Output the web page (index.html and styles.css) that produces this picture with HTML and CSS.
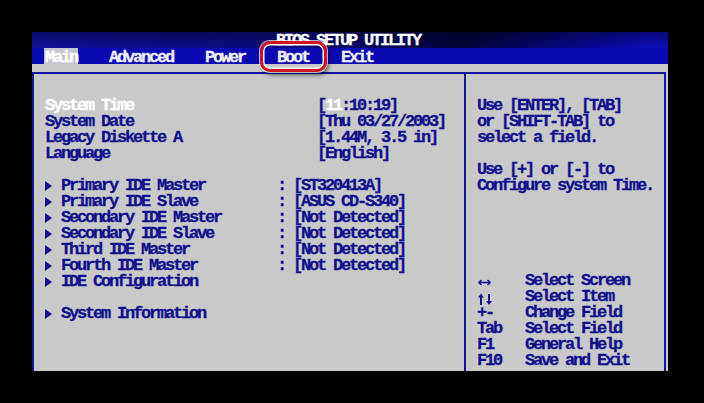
FILE: index.html
```html
<!DOCTYPE html>
<html lang="en">
<head>
    <meta charset="UTF-8">
    <title>BIOS Setup Utility</title>
    <link rel="stylesheet" href="styles.css">
</head>
<body>
    <div class="screen">
        <div class="title">BIOS SETUP UTILITY</div>
        <nav class="menu">
            <span class="tab active">Main</span>
            <span class="tab">Advanced</span>
            <span class="tab">Power</span>
            <span class="tab">Boot</span>
            <span class="tab">Exit</span>
        </nav>
        <div class="spacer"></div>

        <div class="panels">
            <!-- Settings list -->
            <div class="main-panel">
                <div class="row selected">
                    <span>System Time</span>
                    <span>[<span class="field">11</span>:10:19]</span>
                </div>
                <div class="row">
                    <span>System Date</span>
                    <span>[Thu 03/27/2003]</span>
                </div>
                <div class="row">
                    <span>Legacy Diskette A</span>
                    <span>[1.44M, 3.5 in]</span>
                </div>
                <div class="row">
                    <span>Language</span>
                    <span>[English]</span>
                </div>
                <div class="blank"></div>
                <div class="row sub">
                    <span class="arrow"></span><span>Primary IDE Master</span><span>:</span><span>[ST320413A]</span>
                </div>
                <div class="row sub">
                    <span class="arrow"></span><span>Primary IDE Slave</span><span>:</span><span>[ASUS CD-S340]</span>
                </div>
                <div class="row sub">
                    <span class="arrow"></span><span>Secondary IDE Master</span><span>:</span><span>[Not Detected]</span>
                </div>
                <div class="row sub">
                    <span class="arrow"></span><span>Secondary IDE Slave</span><span>:</span><span>[Not Detected]</span>
                </div>
                <div class="row sub">
                    <span class="arrow"></span><span>Third IDE Master</span><span>:</span><span>[Not Detected]</span>
                </div>
                <div class="row sub">
                    <span class="arrow"></span><span>Fourth IDE Master</span><span>:</span><span>[Not Detected]</span>
                </div>
                <div class="row sub">
                    <span class="arrow"></span><span>IDE Configuration</span>
                </div>
                <div class="blank"></div>
                <div class="row sub">
                    <span class="arrow"></span><span>System Information</span>
                </div>
            </div>

            <!-- Help text and key legend -->
            <div class="help-panel">
                <div class="help-text">
                    <div>Use [ENTER], [TAB]</div>
                    <div>or [SHIFT-TAB] to</div>
                    <div>select a field.</div>
                    <div class="blank"></div>
                    <div>Use [+] or [-] to</div>
                    <div>Configure system Time.</div>
                </div>
                <div class="keys">
                    <svg class="key-icon" width="16" height="16" viewBox="0 0 16 16">
                        <path d="M1.5 9.5h12M1.5 9.5l3-2.5M1.5 9.5l3 2.5M13.5 9.5l-3-2.5M13.5 9.5l-3 2.5" stroke="currentColor" stroke-width="1.5" fill="none"/>
                    </svg>
                    <span>Select Screen</span>
                    <svg class="key-icon" width="16" height="16" viewBox="0 0 16 16">
                        <path d="M4 7v9M12 5v8" stroke="currentColor" stroke-width="2" fill="none"/>
                        <path d="M1 8.5L4 4.5 7 8.5zM9 12l3 4 3-4z" fill="currentColor"/>
                    </svg>
                    <span>Select Item</span>
                    <span>+-</span><span>Change Field</span>
                    <span>Tab</span><span>Select Field</span>
                    <span>F1</span><span>General Help</span>
                    <span>F10</span><span>Save and Exit</span>
                </div>
            </div>
        </div>

        <div class="marker"></div>
    </div>
</body>
</html>
```

FILE: styles.css
```css
/* General Styles */
body {
    margin: 0;
    background-color: #000;
    width: 704px;
    height: 403px;
    overflow: hidden;
}

.screen {
    position: relative;
    display: flex;
    flex-direction: column;
    width: 636px;
    height: 339px;
    margin: 32px 0 0 32px;
    background-color: #c9c9c9;
    color: #10108e;
    font-family: "Liberation Mono", "DejaVu Sans Mono", monospace;
    font-weight: bold;
    font-size: 17px;
    letter-spacing: -2.2px;
    line-height: 16px;
    white-space: nowrap;
    -webkit-text-stroke: 0.3px currentColor;
}

/* Title and menu bar */
.title {
    height: 16px;
    overflow: hidden;
    padding-left: 244px;
    line-height: 18px;
    color: #fff;
    background:
        linear-gradient(to bottom, rgba(0, 0, 0, 0.35), rgba(0, 0, 0, 0)),
        linear-gradient(to right, #12129e 0%, #0a0a7c 40%, #02023a 68%, #06067a 82%, #0e0ebc 97%);
}

.menu {
    display: flex;
    gap: 32px;
    height: 16px;
    overflow: hidden;
    padding-left: 13px;
    line-height: 19px;
    background-color: #0a0ab2;
    color: #f0f0ff;
}

.tab.active {
    background-color: #c6c6d2;
    color: #fff;
    padding: 0 1px;
    margin: 0 -1px;
}

.spacer {
    height: 8px;
}

/* Panels */
.panels {
    display: flex;
    flex: 1;
    min-height: 0;
    margin-right: 2px;
    border: 2px solid #15159c;
    border-bottom: none;
}

.main-panel {
    width: 419px;
    padding: 24px 0 0 11px;
    border-right: 2px solid #15159c;
}

.row {
    display: grid;
    grid-template-columns: 272px auto;
    height: 16px;
}

.row.sub {
    grid-template-columns: 16px 216px 16px auto;
}

.row.selected > span:first-child,
.field {
    color: #fff;
}

.blank {
    height: 16px;
}

.arrow {
    display: block;
    width: 0;
    height: 0;
    margin-top: 3px;
    border-left: 7px solid #10108e;
    border-top: 5px solid transparent;
    border-bottom: 5px solid transparent;
}

.help-panel {
    display: flex;
    flex-direction: column;
    flex: 1;
    padding: 24px 0 2px 11px;
}

.keys {
    display: grid;
    grid-template-columns: 48px auto;
    grid-auto-rows: 16px;
    margin-top: auto;
}

.key-icon {
    display: block;
}

/* Red highlight round the Boot tab */
.marker {
    position: absolute;
    left: 228px;
    top: 9px;
    width: 67px;
    height: 31px;
    box-sizing: border-box;
    border: 3px solid #d3111f;
    border-radius: 10px;
    box-shadow:
        inset 0 0 0 1.5px #fff,
        0 0 0 1px rgba(255, 255, 255, 0.7),
        2px 3px 4px rgba(0, 0, 0, 0.55);
}
```
